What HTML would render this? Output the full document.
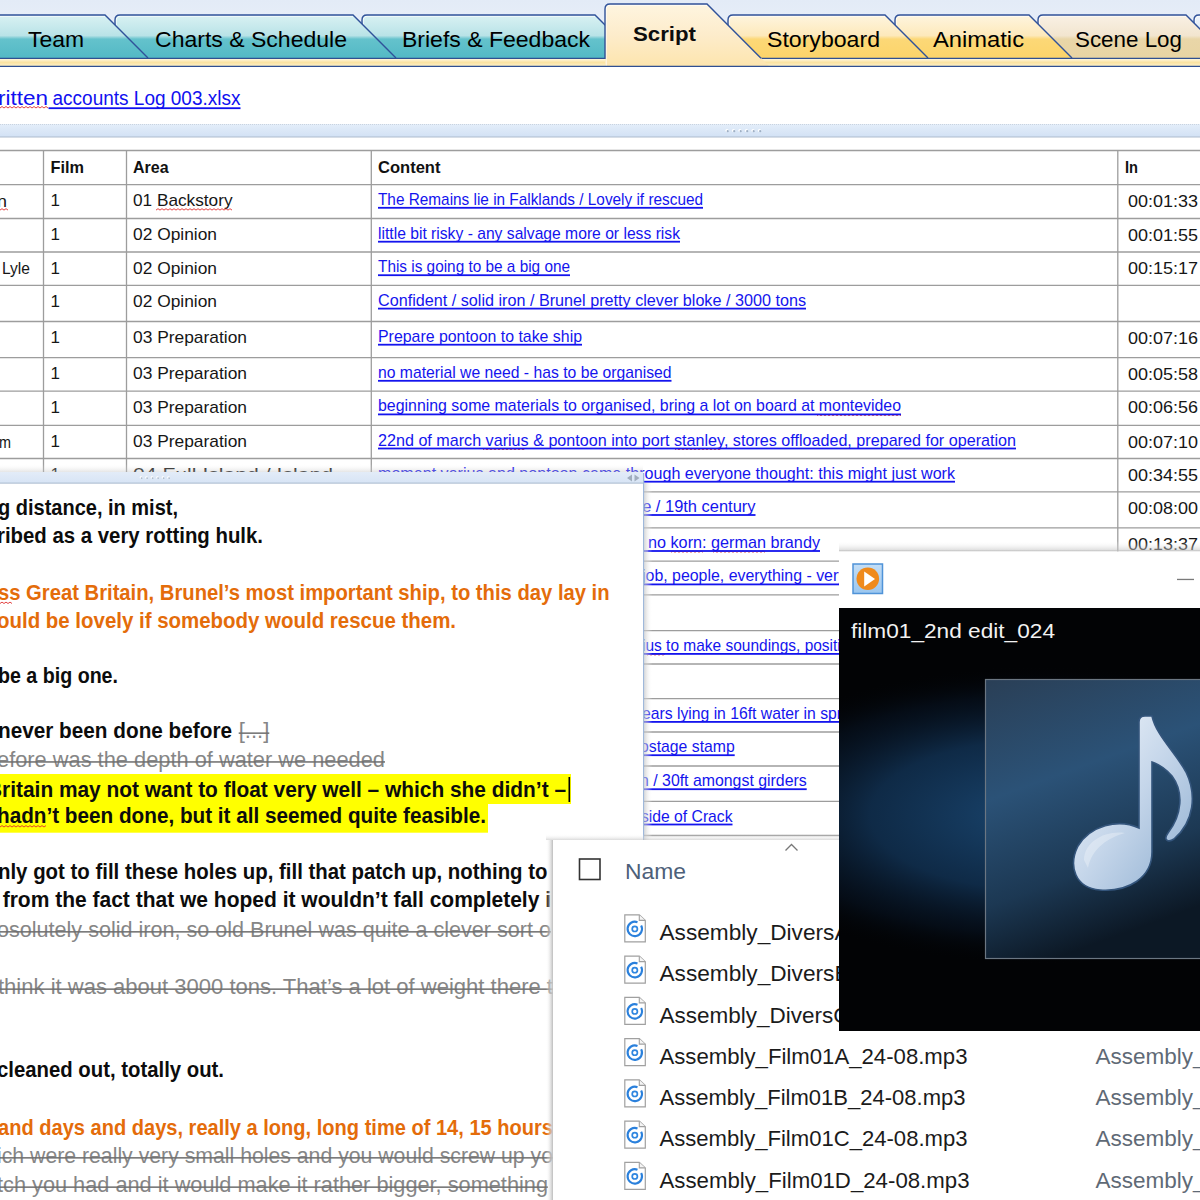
<!DOCTYPE html>
<html><head><meta charset="utf-8"><title>Script</title>
<style>html,body{margin:0;padding:0;width:1200px;height:1200px;overflow:hidden;background:#fff;font-family:"Liberation Sans",sans-serif}svg{display:block}</style>
</head><body>
<svg width="1200" height="1200" viewBox="0 0 1200 1200" font-family="Liberation Sans"><defs>
<linearGradient id="bgTop" x1="0" y1="0" x2="0" y2="1"><stop offset="0" stop-color="#e3ebf7"/><stop offset="1" stop-color="#eef3fa"/></linearGradient>
<linearGradient id="gTeal" x1="0" y1="0" x2="0" y2="1"><stop offset="0" stop-color="#d9f1f3"/><stop offset="0.48" stop-color="#b9e3e7"/><stop offset="0.56" stop-color="#64c2cc"/><stop offset="1" stop-color="#53b9c5"/></linearGradient>
<linearGradient id="gYel" x1="0" y1="0" x2="0" y2="1"><stop offset="0" stop-color="#fef5df"/><stop offset="0.48" stop-color="#fde9bb"/><stop offset="0.56" stop-color="#fcd877"/><stop offset="1" stop-color="#fcd46a"/></linearGradient>
<linearGradient id="gTan" x1="0" y1="0" x2="0" y2="1"><stop offset="0" stop-color="#f9f1e5"/><stop offset="0.48" stop-color="#f2e5cf"/><stop offset="0.56" stop-color="#e9d6a8"/><stop offset="1" stop-color="#e8d4a3"/></linearGradient>
<linearGradient id="gScript" x1="0" y1="0" x2="0" y2="1"><stop offset="0" stop-color="#fef5e0"/><stop offset="0.5" stop-color="#fdeccb"/><stop offset="1" stop-color="#fde5ae"/></linearGradient>
<linearGradient id="gBlueTab" x1="0" y1="0" x2="0" y2="1"><stop offset="0" stop-color="#eef4fb"/><stop offset="1" stop-color="#c7daf0"/></linearGradient>
<linearGradient id="gBand" x1="0" y1="0" x2="0" y2="1"><stop offset="0" stop-color="#fff9e6"/><stop offset="0.2" stop-color="#fef3d2"/><stop offset="0.55" stop-color="#fbe3a2"/><stop offset="1" stop-color="#fdf0c6"/></linearGradient>
<linearGradient id="gSplit" x1="0" y1="0" x2="0" y2="1"><stop offset="0" stop-color="#e4eefa"/><stop offset="1" stop-color="#d2e1f4"/></linearGradient>
<linearGradient id="shTop" x1="0" y1="0" x2="0" y2="1"><stop offset="0" stop-color="#fff" stop-opacity="0"/><stop offset="1" stop-color="#bdbdbd" stop-opacity="1"/></linearGradient>
<linearGradient id="shLeft" x1="0" y1="0" x2="1" y2="0"><stop offset="0" stop-color="#fff" stop-opacity="0"/><stop offset="1" stop-color="#bdbdbd" stop-opacity="1"/></linearGradient>
<linearGradient id="shRight" x1="0" y1="0" x2="1" y2="0"><stop offset="0" stop-color="#c8c8c8" stop-opacity="1"/><stop offset="1" stop-color="#fff" stop-opacity="0"/></linearGradient>
<linearGradient id="gDocBar" x1="0" y1="0" x2="0" y2="1"><stop offset="0" stop-color="#e3ecf8"/><stop offset="1" stop-color="#d7e4f5"/></linearGradient>
<radialGradient id="gGlow" gradientUnits="userSpaceOnUse" cx="1040" cy="815" r="340" gradientTransform="translate(1040 815) scale(1 0.44) translate(-1040 -815)"><stop offset="0" stop-color="#1a4670"/><stop offset="0.5" stop-color="#113152" stop-opacity="0.85"/><stop offset="0.8" stop-color="#081628" stop-opacity="0.5"/><stop offset="1" stop-color="#020305" stop-opacity="0"/></radialGradient>
<linearGradient id="gAlbum" x1="0" y1="0" x2="0.3" y2="1"><stop offset="0" stop-color="#2a3f56"/><stop offset="0.4" stop-color="#2b5277"/><stop offset="0.75" stop-color="#1c3853"/><stop offset="1" stop-color="#0c1825"/></linearGradient>
<linearGradient id="gNote" x1="0" y1="0" x2="1" y2="1"><stop offset="0" stop-color="#f4f8fc"/><stop offset="0.5" stop-color="#c5d6ea"/><stop offset="1" stop-color="#8eaed0"/></linearGradient>
<linearGradient id="gIcon" x1="0" y1="0" x2="0" y2="1"><stop offset="0" stop-color="#c4def6"/><stop offset="1" stop-color="#9ac6ef"/></linearGradient>
</defs>
<rect x="0" y="0" width="1200" height="1200" fill="#fff"/>
<rect x="0" y="0" width="1200" height="66" fill="url(#bgTop)"/>
<path d="M1194,58 L1194,20 Q1194,15 1199,15 L1400,15 L1443,58 Z" fill="url(#gBlueTab)"/>
<path d="M1195.2,58 L1195.2,20 Q1195.2,16.2 1199,16.2 L1400,16.2" fill="none" stroke="#ffffff" stroke-width="1" opacity="0.8"/>
<path d="M1194,58 L1194,20 Q1194,15 1199,15 L1400,15 L1443,58" fill="none" stroke="#30529a" stroke-width="1.4"/>
<path d="M1038,58 L1038,20 Q1038,15 1043,15 L1186,15 L1229,58 Z" fill="url(#gTan)"/>
<path d="M1039.2,58 L1039.2,20 Q1039.2,16.2 1043,16.2 L1186,16.2" fill="none" stroke="#ffffff" stroke-width="1" opacity="0.8"/>
<path d="M1038,58 L1038,20 Q1038,15 1043,15 L1186,15 L1229,58" fill="none" stroke="#30529a" stroke-width="1.4"/>
<path d="M895,58 L895,20 Q895,15 900,15 L1029,15 L1072,58 Z" fill="url(#gYel)"/>
<path d="M896.2,58 L896.2,20 Q896.2,16.2 900,16.2 L1029,16.2" fill="none" stroke="#ffffff" stroke-width="1" opacity="0.8"/>
<path d="M895,58 L895,20 Q895,15 900,15 L1029,15 L1072,58" fill="none" stroke="#30529a" stroke-width="1.4"/>
<path d="M728,58 L728,20 Q728,15 733,15 L885,15 L928,58 Z" fill="url(#gYel)"/>
<path d="M729.2,58 L729.2,20 Q729.2,16.2 733,16.2 L885,16.2" fill="none" stroke="#ffffff" stroke-width="1" opacity="0.8"/>
<path d="M728,58 L728,20 Q728,15 733,15 L885,15 L928,58" fill="none" stroke="#30529a" stroke-width="1.4"/>
<path d="M362,58 L362,20 Q362,15 367,15 L595,15 L638,58 Z" fill="url(#gTeal)"/>
<path d="M363.2,58 L363.2,20 Q363.2,16.2 367,16.2 L595,16.2" fill="none" stroke="#ffffff" stroke-width="1" opacity="0.8"/>
<path d="M362,58 L362,20 Q362,15 367,15 L595,15 L638,58" fill="none" stroke="#30529a" stroke-width="1.4"/>
<path d="M115,58 L115,20 Q115,15 120,15 L353,15 L396,58 Z" fill="url(#gTeal)"/>
<path d="M116.2,58 L116.2,20 Q116.2,16.2 120,16.2 L353,16.2" fill="none" stroke="#ffffff" stroke-width="1" opacity="0.8"/>
<path d="M115,58 L115,20 Q115,15 120,15 L353,15 L396,58" fill="none" stroke="#30529a" stroke-width="1.4"/>
<path d="M-30,58 L-30,20 Q-30,15 -25,15 L105,15 L148,58 Z" fill="url(#gTeal)"/>
<path d="M-28.8,58 L-28.8,20 Q-28.8,16.2 -25,16.2 L105,16.2" fill="none" stroke="#ffffff" stroke-width="1" opacity="0.8"/>
<path d="M-30,58 L-30,20 Q-30,15 -25,15 L105,15 L148,58" fill="none" stroke="#30529a" stroke-width="1.4"/>
<rect x="0" y="58" width="1200" height="8" fill="url(#gBand)"/>
<line x1="0" y1="58.3" x2="1200" y2="58.3" stroke="#2f4f92" stroke-width="1.3"/>
<path d="M605,66 L605,9 Q605,4 610,4 L707,4 L769,66 Z" fill="url(#gScript)"/>
<path d="M606.2,66 L606.2,9 Q606.2,5.2 610,5.2 L707,5.2" fill="none" stroke="#fff" stroke-width="1" opacity="0.8"/>
<path d="M605,59 L605,9 Q605,4 610,4 L707,4 L761,58.3" fill="none" stroke="#30529a" stroke-width="1.4"/>
<line x1="0" y1="66.4" x2="1200" y2="66.4" stroke="#2f4f92" stroke-width="1.4"/>
<g font-family="Liberation Sans" fill="#1a1a1a">
<text x="28" y="47" font-size="22" fill="#000" textLength="56.0" lengthAdjust="spacingAndGlyphs">Team</text>
<text x="155" y="47" font-size="22" fill="#000" textLength="192.0" lengthAdjust="spacingAndGlyphs">Charts &amp; Schedule</text>
<text x="402" y="47" font-size="22" fill="#000" textLength="188.0" lengthAdjust="spacingAndGlyphs">Briefs &amp; Feedback</text>
<text x="633" y="41" font-size="21" font-weight="bold" fill="#0d0d0d" textLength="63.0" lengthAdjust="spacingAndGlyphs">Script</text>
<text x="767" y="47" font-size="22" fill="#000" textLength="113.0" lengthAdjust="spacingAndGlyphs">Storyboard</text>
<text x="933" y="47" font-size="22" fill="#000" textLength="91.0" lengthAdjust="spacingAndGlyphs">Animatic</text>
<text x="1075" y="47" font-size="22" fill="#000" textLength="107.0" lengthAdjust="spacingAndGlyphs">Scene Log</text>
</g>
<g font-family="Liberation Sans">
<text x="-2" y="104.7" font-size="19.5" fill="#1010f0" textLength="50.0" lengthAdjust="spacingAndGlyphs">ritten</text>
<text x="52.5" y="104.7" font-size="19.5" fill="#1010f0" textLength="188.0" lengthAdjust="spacingAndGlyphs">accounts Log 003.xlsx</text>
<rect x="48.5" y="107.3" width="192" height="1.8" fill="#1010f0"/>
<path d="M0,108 l2,-1.5 l2,1.5 l2,-1.5 l2,1.5 l2,-1.5 l2,1.5 l2,-1.5 l2,1.5 l2,-1.5 l2,1.5 l2,-1.5 l2,1.5 l2,-1.5 l2,1.5 l2,-1.5 l2,1.5 l2,-1.5 l2,1.5 l2,-1.5 l2,1.5 l2,-1.5 l2,1.5 l2,-1.5 l2,1.5" fill="none" stroke="#e03030" stroke-width="0.9"/>
</g>
<rect x="0" y="124" width="1200" height="13" fill="url(#gSplit)"/>
<line x1="0" y1="124.5" x2="1200" y2="124.5" stroke="#c9d3df" stroke-width="1" stroke-dasharray="1,1"/>
<line x1="0" y1="137" x2="1200" y2="137" stroke="#aebccd" stroke-width="1.2"/>
<circle cx="727.0" cy="130.5" r="1.6" fill="#fff"/><circle cx="727.7" cy="131.2" r="1.1" fill="#9fb0c5"/>
<circle cx="733.5" cy="130.5" r="1.6" fill="#fff"/><circle cx="734.2" cy="131.2" r="1.1" fill="#9fb0c5"/>
<circle cx="740.0" cy="130.5" r="1.6" fill="#fff"/><circle cx="740.7" cy="131.2" r="1.1" fill="#9fb0c5"/>
<circle cx="746.5" cy="130.5" r="1.6" fill="#fff"/><circle cx="747.2" cy="131.2" r="1.1" fill="#9fb0c5"/>
<circle cx="753.0" cy="130.5" r="1.6" fill="#fff"/><circle cx="753.7" cy="131.2" r="1.1" fill="#9fb0c5"/>
<circle cx="759.5" cy="130.5" r="1.6" fill="#fff"/><circle cx="760.2" cy="131.2" r="1.1" fill="#9fb0c5"/>
<g stroke="#9d9d9d" stroke-width="1.3">
<line x1="0" y1="150.5" x2="1200" y2="150.5"/>
<line x1="0" y1="184.6" x2="1200" y2="184.6"/>
<line x1="0" y1="218.5" x2="1200" y2="218.5"/>
<line x1="0" y1="252" x2="1200" y2="252"/>
<line x1="0" y1="285.4" x2="1200" y2="285.4"/>
<line x1="0" y1="321.5" x2="1200" y2="321.5"/>
<line x1="0" y1="357.6" x2="1200" y2="357.6"/>
<line x1="0" y1="391.2" x2="1200" y2="391.2"/>
<line x1="0" y1="425.3" x2="1200" y2="425.3"/>
<line x1="0" y1="458.5" x2="1200" y2="458.5"/>
<line x1="0" y1="491.8" x2="1200" y2="491.8"/>
<line x1="0" y1="527.8" x2="1200" y2="527.8"/>
<line x1="0" y1="561.2" x2="1200" y2="561.2"/>
<line x1="0" y1="594.8" x2="1200" y2="594.8"/>
<line x1="0" y1="630.7" x2="1200" y2="630.7"/>
<line x1="0" y1="664" x2="1200" y2="664"/>
<line x1="0" y1="698.7" x2="1200" y2="698.7"/>
<line x1="0" y1="732" x2="1200" y2="732"/>
<line x1="0" y1="766" x2="1200" y2="766"/>
<line x1="0" y1="801.3" x2="1200" y2="801.3"/>
<line x1="0" y1="835.5" x2="1200" y2="835.5"/>
<line x1="0" y1="870" x2="1200" y2="870"/>
<line x1="43.5" y1="150" x2="43.5" y2="1200"/>
<line x1="126.5" y1="150" x2="126.5" y2="1200"/>
<line x1="371.3" y1="150" x2="371.3" y2="1200"/>
<line x1="1117.8" y1="150" x2="1117.8" y2="1200"/>
</g>
<g font-family="Liberation Sans">
<text x="50.5" y="173.2" font-size="17" font-weight="bold" fill="#111" textLength="33.5" lengthAdjust="spacingAndGlyphs">Film</text>
<text x="133" y="173.2" font-size="17" font-weight="bold" fill="#111" textLength="35.6" lengthAdjust="spacingAndGlyphs">Area</text>
<text x="378" y="173.2" font-size="17" font-weight="bold" fill="#111" textLength="62.5" lengthAdjust="spacingAndGlyphs">Content</text>
<text x="1125" y="173.2" font-size="17" font-weight="bold" fill="#111" textLength="13.0" lengthAdjust="spacingAndGlyphs">In</text>
<text x="50.5" y="206.2" font-size="17" fill="#161616">1</text>
<text x="133" y="206.2" font-size="17" fill="#161616" textLength="99.5" lengthAdjust="spacingAndGlyphs">01 Backstory</text>
<text x="50.5" y="240.1" font-size="17" fill="#161616">1</text>
<text x="133" y="240.1" font-size="17" fill="#161616" textLength="84.0" lengthAdjust="spacingAndGlyphs">02 Opinion</text>
<text x="50.5" y="273.6" font-size="17" fill="#161616">1</text>
<text x="133" y="273.6" font-size="17" fill="#161616" textLength="84.0" lengthAdjust="spacingAndGlyphs">02 Opinion</text>
<text x="50.5" y="307.0" font-size="17" fill="#161616">1</text>
<text x="133" y="307.0" font-size="17" fill="#161616" textLength="84.0" lengthAdjust="spacingAndGlyphs">02 Opinion</text>
<text x="50.5" y="343.1" font-size="17" fill="#161616">1</text>
<text x="133" y="343.1" font-size="17" fill="#161616" textLength="114.0" lengthAdjust="spacingAndGlyphs">03 Preparation</text>
<text x="50.5" y="379.20000000000005" font-size="17" fill="#161616">1</text>
<text x="133" y="379.20000000000005" font-size="17" fill="#161616" textLength="114.0" lengthAdjust="spacingAndGlyphs">03 Preparation</text>
<text x="50.5" y="412.8" font-size="17" fill="#161616">1</text>
<text x="133" y="412.8" font-size="17" fill="#161616" textLength="114.0" lengthAdjust="spacingAndGlyphs">03 Preparation</text>
<text x="50.5" y="446.90000000000003" font-size="17" fill="#161616">1</text>
<text x="133" y="446.90000000000003" font-size="17" fill="#161616" textLength="114.0" lengthAdjust="spacingAndGlyphs">03 Preparation</text>
<text x="50.5" y="480.1" font-size="17" fill="#161616">1</text>
<text x="133" y="480.1" font-size="17" fill="#161616" textLength="200.0" lengthAdjust="spacingAndGlyphs">04 Full Island / Island</text>
<text x="-3" y="206.79999999999998" font-size="17" fill="#161616" textLength="10.0" lengthAdjust="spacingAndGlyphs">n</text>
<text x="2" y="274.2" font-size="17" fill="#161616" textLength="28.0" lengthAdjust="spacingAndGlyphs">Lyle</text>
<text x="-1" y="447.5" font-size="17" fill="#161616" textLength="12.0" lengthAdjust="spacingAndGlyphs">m</text>
<path d="M156,210.1 l2,-1.4 l2,1.4 l2,-1.4 l2,1.4 l2,-1.4 l2,1.4 l2,-1.4 l2,1.4 l2,-1.4 l2,1.4 l2,-1.4 l2,1.4 l2,-1.4 l2,1.4 l2,-1.4 l2,1.4 l2,-1.4 l2,1.4 l2,-1.4 l2,1.4 l2,-1.4 l2,1.4 l2,-1.4 l2,1.4 l2,-1.4 l2,1.4 l2,-1.4 l2,1.4 l2,-1.4 l2,1.4 l2,-1.4 l2,1.4 l2,-1.4 l2,1.4 l2,-1.4 l2,1.4 l2,-1.4 l2,1.4" fill="none" stroke="#e03030" stroke-width="0.9"/>
<path d="M817,415.7 l2,-1.4 l2,1.4 l2,-1.4 l2,1.4 l2,-1.4 l2,1.4 l2,-1.4 l2,1.4 l2,-1.4 l2,1.4 l2,-1.4 l2,1.4 l2,-1.4 l2,1.4 l2,-1.4 l2,1.4 l2,-1.4 l2,1.4 l2,-1.4 l2,1.4 l2,-1.4 l2,1.4 l2,-1.4 l2,1.4 l2,-1.4 l2,1.4 l2,-1.4 l2,1.4 l2,-1.4 l2,1.4 l2,-1.4 l2,1.4 l2,-1.4 l2,1.4 l2,-1.4 l2,1.4 l2,-1.4 l2,1.4 l2,-1.4 l2,1.4 l2,-1.4 l2,1.4" fill="none" stroke="#e03030" stroke-width="0.9"/>
<path d="M483,449.8 l2,-1.4 l2,1.4 l2,-1.4 l2,1.4 l2,-1.4 l2,1.4 l2,-1.4 l2,1.4 l2,-1.4 l2,1.4 l2,-1.4 l2,1.4 l2,-1.4 l2,1.4 l2,-1.4 l2,1.4 l2,-1.4 l2,1.4 l2,-1.4 l2,1.4 l2,-1.4" fill="none" stroke="#e03030" stroke-width="0.9"/>
<path d="M675,449.8 l2,-1.4 l2,1.4 l2,-1.4 l2,1.4 l2,-1.4 l2,1.4 l2,-1.4 l2,1.4 l2,-1.4 l2,1.4 l2,-1.4 l2,1.4 l2,-1.4 l2,1.4 l2,-1.4 l2,1.4 l2,-1.4 l2,1.4 l2,-1.4 l2,1.4 l2,-1.4 l2,1.4 l2,-1.4" fill="none" stroke="#e03030" stroke-width="0.9"/>
<path d="M671,552.3 l2,-1.4 l2,1.4 l2,-1.4 l2,1.4 l2,-1.4 l2,1.4 l2,-1.4 l2,1.4 l2,-1.4 l2,1.4 l2,-1.4 l2,1.4 l2,-1.4 l2,1.4 l2,-1.4 l2,1.4" fill="none" stroke="#e03030" stroke-width="0.9"/>
<path d="M713,552.3 l2,-1.4 l2,1.4 l2,-1.4 l2,1.4 l2,-1.4 l2,1.4 l2,-1.4 l2,1.4 l2,-1.4 l2,1.4 l2,-1.4 l2,1.4 l2,-1.4 l2,1.4 l2,-1.4 l2,1.4 l2,-1.4 l2,1.4 l2,-1.4 l2,1.4 l2,-1.4 l2,1.4 l2,-1.4 l2,1.4 l2,-1.4 l2,1.4" fill="none" stroke="#e03030" stroke-width="0.9"/>
<rect x="640" y="550.1999999999999" width="10" height="1.6" fill="#1414ee"/>
<path d="M647,655.2 l2,-1.4 l2,1.4 l2,-1.4 l2,1.4 l2,-1.4 l2,1.4 l2,-1.4 l2,1.4 l2,-1.4" fill="none" stroke="#e03030" stroke-width="0.9"/>
<path d="M0,210.1 l2,-1.4 l2,1.4 l2,-1.4 l2,1.4" fill="none" stroke="#e03030" stroke-width="0.9"/>
<text x="378" y="204.79999999999998" font-size="17" fill="#1414ee" textLength="325.0" lengthAdjust="spacingAndGlyphs">The Remains lie in Falklands / Lovely if rescued</text>
<rect x="378" y="206.9" width="325" height="1.8" fill="#1414ee"/>
<text x="378" y="238.7" font-size="17" fill="#1414ee" textLength="302.0" lengthAdjust="spacingAndGlyphs">little bit risky - any salvage more or less risk</text>
<rect x="378" y="240.8" width="302" height="1.8" fill="#1414ee"/>
<text x="378" y="272.2" font-size="17" fill="#1414ee" textLength="192.0" lengthAdjust="spacingAndGlyphs">This is going to be a big one</text>
<rect x="378" y="274.3" width="192" height="1.8" fill="#1414ee"/>
<text x="378" y="305.59999999999997" font-size="17" fill="#1414ee" textLength="428.0" lengthAdjust="spacingAndGlyphs">Confident / solid iron / Brunel pretty clever bloke / 3000 tons</text>
<rect x="378" y="307.7" width="428" height="1.8" fill="#1414ee"/>
<text x="378" y="341.7" font-size="17" fill="#1414ee" textLength="204.0" lengthAdjust="spacingAndGlyphs">Prepare pontoon to take ship</text>
<rect x="378" y="343.8" width="204" height="1.8" fill="#1414ee"/>
<text x="378" y="377.8" font-size="17" fill="#1414ee" textLength="293.5" lengthAdjust="spacingAndGlyphs">no material we need - has to be organised</text>
<rect x="378" y="379.90000000000003" width="293.5" height="1.8" fill="#1414ee"/>
<text x="378" y="411.4" font-size="17" fill="#1414ee" textLength="523.0" lengthAdjust="spacingAndGlyphs">beginning some materials to organised, bring a lot on board at montevideo</text>
<rect x="378" y="413.5" width="523" height="1.8" fill="#1414ee"/>
<text x="378" y="445.5" font-size="17" fill="#1414ee" textLength="638.0" lengthAdjust="spacingAndGlyphs">22nd of march varius &amp; pontoon into port stanley, stores offloaded, prepared for operation</text>
<rect x="378" y="447.6" width="638" height="1.8" fill="#1414ee"/>
<text x="378" y="478.7" font-size="17" fill="#1414ee" textLength="577.0" lengthAdjust="spacingAndGlyphs">moment varius and pontoon came through everyone thought: this might just work</text>
<rect x="378" y="480.8" width="577" height="1.8" fill="#1414ee"/>
<text x="633" y="512.0" font-size="17" fill="#1414ee" textLength="122.5" lengthAdjust="spacingAndGlyphs">ne / 19th century</text>
<rect x="633" y="514.1" width="122.5" height="1.8" fill="#1414ee"/>
<text x="648" y="548.0" font-size="17" fill="#1414ee" textLength="172.0" lengthAdjust="spacingAndGlyphs">no korn: german brandy</text>
<rect x="648" y="550.0999999999999" width="172" height="1.8" fill="#1414ee"/>
<text x="642" y="581.4000000000001" font-size="17" fill="#1414ee" textLength="244.0" lengthAdjust="spacingAndGlyphs">job, people, everything - very good</text>
<rect x="642" y="583.5" width="244" height="1.8" fill="#1414ee"/>
<text x="642" y="650.9000000000001" font-size="17" fill="#1414ee" textLength="216.0" lengthAdjust="spacingAndGlyphs">ius to make soundings, position</text>
<rect x="642" y="653.0" width="216" height="1.8" fill="#1414ee"/>
<text x="642" y="718.9000000000001" font-size="17" fill="#1414ee" textLength="221.0" lengthAdjust="spacingAndGlyphs">ears lying in 16ft water in spring</text>
<rect x="642" y="721.0" width="221" height="1.8" fill="#1414ee"/>
<text x="640" y="752.2" font-size="17" fill="#1414ee" textLength="94.7" lengthAdjust="spacingAndGlyphs">ostage stamp</text>
<rect x="640" y="754.3" width="94.70000000000005" height="1.8" fill="#1414ee"/>
<text x="640" y="786.2" font-size="17" fill="#1414ee" textLength="166.7" lengthAdjust="spacingAndGlyphs">n / 30ft amongst girders</text>
<rect x="640" y="788.3" width="166.70000000000005" height="1.8" fill="#1414ee"/>
<text x="641" y="821.5" font-size="17" fill="#1414ee" textLength="91.5" lengthAdjust="spacingAndGlyphs">side of Crack</text>
<rect x="641" y="823.5999999999999" width="91.5" height="1.8" fill="#1414ee"/>
<text x="1128" y="206.79999999999998" font-size="17" fill="#161616" textLength="70.0" lengthAdjust="spacingAndGlyphs">00:01:33</text>
<text x="1128" y="240.7" font-size="17" fill="#161616" textLength="70.0" lengthAdjust="spacingAndGlyphs">00:01:55</text>
<text x="1128" y="274.2" font-size="17" fill="#161616" textLength="70.0" lengthAdjust="spacingAndGlyphs">00:15:17</text>
<text x="1128" y="343.7" font-size="17" fill="#161616" textLength="70.0" lengthAdjust="spacingAndGlyphs">00:07:16</text>
<text x="1128" y="379.8" font-size="17" fill="#161616" textLength="70.0" lengthAdjust="spacingAndGlyphs">00:05:58</text>
<text x="1128" y="413.4" font-size="17" fill="#161616" textLength="70.0" lengthAdjust="spacingAndGlyphs">00:06:56</text>
<text x="1128" y="447.5" font-size="17" fill="#161616" textLength="70.0" lengthAdjust="spacingAndGlyphs">00:07:10</text>
<text x="1128" y="480.7" font-size="17" fill="#161616" textLength="70.0" lengthAdjust="spacingAndGlyphs">00:34:55</text>
<text x="1128" y="514.0" font-size="17" fill="#161616" textLength="70.0" lengthAdjust="spacingAndGlyphs">00:08:00</text>
<text x="1128" y="550.0" font-size="17" fill="#161616" textLength="70.0" lengthAdjust="spacingAndGlyphs">00:13:37</text>
</g>
<rect x="0" y="464" width="643" height="8" fill="url(#shTop)" opacity="0.4"/>
<rect x="0" y="472" width="643" height="728" fill="#fff"/>
<rect x="0" y="472" width="643" height="11" fill="url(#gDocBar)"/>
<line x1="0" y1="483.2" x2="643" y2="483.2" stroke="#b4c3d6" stroke-width="1.2"/>
<rect x="643" y="473" width="1.3" height="727" fill="#9fb8da"/>
<rect x="644.3" y="483" width="8" height="717" fill="url(#shRight)" opacity="0.7"/>
<circle cx="141.0" cy="477.5" r="1.3" fill="#fff"/><circle cx="141.6" cy="478.1" r="0.9" fill="#a9b7c8"/>
<circle cx="146.5" cy="477.5" r="1.3" fill="#fff"/><circle cx="147.1" cy="478.1" r="0.9" fill="#a9b7c8"/>
<circle cx="152.0" cy="477.5" r="1.3" fill="#fff"/><circle cx="152.6" cy="478.1" r="0.9" fill="#a9b7c8"/>
<circle cx="157.5" cy="477.5" r="1.3" fill="#fff"/><circle cx="158.1" cy="478.1" r="0.9" fill="#a9b7c8"/>
<circle cx="163.0" cy="477.5" r="1.3" fill="#fff"/><circle cx="163.6" cy="478.1" r="0.9" fill="#a9b7c8"/>
<circle cx="168.5" cy="477.5" r="1.3" fill="#fff"/><circle cx="169.1" cy="478.1" r="0.9" fill="#a9b7c8"/>
<path d="M632,474.5 l-5,3.5 l5,3.5 z M634.5,474.5 l5,3.5 l-5,3.5 z" fill="#a0adbd"/>
<rect x="0" y="774" width="571" height="30" fill="#ffff00"/>
<rect x="0" y="803" width="488" height="29.7" fill="#ffff00"/>
<g font-family="Liberation Sans">
<text x="-2" y="514.7" font-size="22" font-weight="bold" fill="#0c0c0c" textLength="180.0" lengthAdjust="spacingAndGlyphs">g distance, in mist,</text>
<text x="-3" y="542.7" font-size="22" font-weight="bold" fill="#0c0c0c" textLength="266.0" lengthAdjust="spacingAndGlyphs">ribed as a very rotting hulk.</text>
<text x="-2" y="600" font-size="22" font-weight="bold" fill="#e46c0a" textLength="611.6" lengthAdjust="spacingAndGlyphs">ss Great Britain, Brunel’s most important ship, to this day lay in</text>
<text x="-3" y="628" font-size="22" font-weight="bold" fill="#e46c0a" textLength="459.0" lengthAdjust="spacingAndGlyphs">ould be lovely if somebody would rescue them.</text>
<text x="-2" y="682.7" font-size="22" font-weight="bold" fill="#0c0c0c" textLength="120.0" lengthAdjust="spacingAndGlyphs">be a big one.</text>
<text x="-2" y="738" font-size="22" font-weight="bold" fill="#0c0c0c" textLength="234.0" lengthAdjust="spacingAndGlyphs">never been done before</text>
<text x="-3" y="823.3" font-size="22" font-weight="bold" fill="#0c0c0c" textLength="489.0" lengthAdjust="spacingAndGlyphs">hadn’t been done, but it all seemed quite feasible.</text>
<text x="-2" y="878.5" font-size="22" font-weight="bold" fill="#0c0c0c" textLength="549.5" lengthAdjust="spacingAndGlyphs">nly got to fill these holes up, fill that patch up, nothing to</text>
<text x="2.7" y="907.3" font-size="22" font-weight="bold" fill="#0c0c0c" textLength="548.3" lengthAdjust="spacingAndGlyphs">from the fact that we hoped it wouldn’t fall completely i</text>
<text x="-3" y="1077.3" font-size="22" font-weight="bold" fill="#0c0c0c" textLength="227.0" lengthAdjust="spacingAndGlyphs">cleaned out, totally out.</text>
<text x="-2" y="1134.7" font-size="22" font-weight="bold" fill="#e46c0a" textLength="555.0" lengthAdjust="spacingAndGlyphs">and days and days, really a long, long time of 14, 15 hours</text>
<text x="-13" y="796.7" font-size="22" font-weight="bold" fill="#0c0c0c" textLength="579.0" lengthAdjust="spacingAndGlyphs">Britain may not want to float very well – which she didn’t –</text>
<rect x="568.5" y="777" width="1.6" height="25" fill="#000"/>
<text x="238.7" y="738" font-size="22" fill="#868686" textLength="30.6" lengthAdjust="spacingAndGlyphs">[...]</text>
<rect x="238.7" y="732.4" width="30.600000000000023" height="1.5" fill="#6e6e6e"/>
<text x="-3" y="766.8" font-size="22" fill="#868686" textLength="388.0" lengthAdjust="spacingAndGlyphs">efore was the depth of water we needed</text>
<rect x="0" y="761.1999999999999" width="385" height="1.5" fill="#6e6e6e"/>
<text x="-3" y="936.7" font-size="22" fill="#868686" textLength="554.0" lengthAdjust="spacingAndGlyphs">osolutely solid iron, so old Brunel was quite a clever sort o</text>
<rect x="0" y="931.1" width="551" height="1.5" fill="#6e6e6e"/>
<text x="-2" y="994" font-size="22" fill="#868686" textLength="555.0" lengthAdjust="spacingAndGlyphs">think it was about 3000 tons. That’s a lot of weight there t</text>
<rect x="0" y="988.4" width="553" height="1.5" fill="#6e6e6e"/>
<text x="-3" y="1162.7" font-size="22" fill="#868686" textLength="556.0" lengthAdjust="spacingAndGlyphs">ich were really very small holes and you would screw up yo</text>
<rect x="0" y="1157.1000000000001" width="553" height="1.5" fill="#6e6e6e"/>
<text x="-3" y="1192" font-size="22" fill="#868686" textLength="551.0" lengthAdjust="spacingAndGlyphs">tch you had and it would make it rather bigger, something</text>
<rect x="0" y="1186.4" width="548" height="1.5" fill="#6e6e6e"/>
<path d="M0,603.5 l2,-1.4 l2,1.4 l2,-1.4 l2,1.4 l2,-1.4 l2,1.4" fill="none" stroke="#e03030" stroke-width="0.9"/>
<path d="M0,827 l2,-1.4 l2,1.4 l2,-1.4 l2,1.4 l2,-1.4 l2,1.4 l2,-1.4 l2,1.4 l2,-1.4 l2,1.4 l2,-1.4 l2,1.4 l2,-1.4 l2,1.4 l2,-1.4 l2,1.4 l2,-1.4 l2,1.4 l2,-1.4 l2,1.4 l2,-1.4 l2,1.4 l2,-1.4" fill="none" stroke="#e03030" stroke-width="0.9"/>
</g>
<rect x="546" y="834" width="660" height="6" fill="url(#shTop)" opacity="0.55"/>
<rect x="546" y="840" width="7" height="360" fill="url(#shLeft)"/>
<rect x="553" y="840" width="647" height="360" fill="#fff"/>
<rect x="579.5" y="859" width="20.5" height="20.5" fill="none" stroke="#333" stroke-width="1.6"/>
<path d="M785.5,850.5 L791.5,844.5 L797.5,850.5" fill="none" stroke="#777" stroke-width="1.3"/>
<g font-family="Liberation Sans">
<text x="625" y="879" font-size="22" fill="#4d6079" textLength="61.0" lengthAdjust="spacingAndGlyphs">Name</text>
<path d="M624.8,914.9000000000001 h14.5 l6,5.5 v21.5 h-20.5 z" fill="#fff" stroke="#a0a0a0" stroke-width="1.2"/>
<path d="M639.3,914.9000000000001 v5.5 h6" fill="#f4f4f4" stroke="#a0a0a0" stroke-width="1.1"/>
<path d="M641.16,925.5200000000001 A7.2,7.2 0 1 1 637.5,922.2200000000001" fill="none" stroke="#2a80dc" stroke-width="2.1"/>
<circle cx="634.8" cy="928.9000000000001" r="2.6" fill="none" stroke="#2f86e0" stroke-width="1.7"/>
<text x="659.5" y="940.0" font-size="22" fill="#1b1b1b" textLength="190.0" lengthAdjust="spacingAndGlyphs">Assembly_DiversA</text>
<path d="M624.8,956.1500000000001 h14.5 l6,5.5 v21.5 h-20.5 z" fill="#fff" stroke="#a0a0a0" stroke-width="1.2"/>
<path d="M639.3,956.1500000000001 v5.5 h6" fill="#f4f4f4" stroke="#a0a0a0" stroke-width="1.1"/>
<path d="M641.16,966.7700000000001 A7.2,7.2 0 1 1 637.5,963.4700000000001" fill="none" stroke="#2a80dc" stroke-width="2.1"/>
<circle cx="634.8" cy="970.1500000000001" r="2.6" fill="none" stroke="#2f86e0" stroke-width="1.7"/>
<text x="659.5" y="981.25" font-size="22" fill="#1b1b1b" textLength="190.0" lengthAdjust="spacingAndGlyphs">Assembly_DiversB</text>
<path d="M624.8,997.4000000000001 h14.5 l6,5.5 v21.5 h-20.5 z" fill="#fff" stroke="#a0a0a0" stroke-width="1.2"/>
<path d="M639.3,997.4000000000001 v5.5 h6" fill="#f4f4f4" stroke="#a0a0a0" stroke-width="1.1"/>
<path d="M641.16,1008.0200000000001 A7.2,7.2 0 1 1 637.5,1004.7200000000001" fill="none" stroke="#2a80dc" stroke-width="2.1"/>
<circle cx="634.8" cy="1011.4000000000001" r="2.6" fill="none" stroke="#2f86e0" stroke-width="1.7"/>
<text x="659.5" y="1022.5" font-size="22" fill="#1b1b1b" textLength="190.0" lengthAdjust="spacingAndGlyphs">Assembly_DiversC</text>
<path d="M624.8,1038.65 h14.5 l6,5.5 v21.5 h-20.5 z" fill="#fff" stroke="#a0a0a0" stroke-width="1.2"/>
<path d="M639.3,1038.65 v5.5 h6" fill="#f4f4f4" stroke="#a0a0a0" stroke-width="1.1"/>
<path d="M641.16,1049.27 A7.2,7.2 0 1 1 637.5,1045.97" fill="none" stroke="#2a80dc" stroke-width="2.1"/>
<circle cx="634.8" cy="1052.65" r="2.6" fill="none" stroke="#2f86e0" stroke-width="1.7"/>
<text x="659.5" y="1063.75" font-size="22" fill="#1b1b1b" textLength="308.0" lengthAdjust="spacingAndGlyphs">Assembly_Film01A_24-08.mp3</text>
<text x="1095.5" y="1063.75" font-size="22" fill="#5f6a76" textLength="110.0" lengthAdjust="spacingAndGlyphs">Assembly_</text>
<path d="M624.8,1079.9 h14.5 l6,5.5 v21.5 h-20.5 z" fill="#fff" stroke="#a0a0a0" stroke-width="1.2"/>
<path d="M639.3,1079.9 v5.5 h6" fill="#f4f4f4" stroke="#a0a0a0" stroke-width="1.1"/>
<path d="M641.16,1090.52 A7.2,7.2 0 1 1 637.5,1087.22" fill="none" stroke="#2a80dc" stroke-width="2.1"/>
<circle cx="634.8" cy="1093.9" r="2.6" fill="none" stroke="#2f86e0" stroke-width="1.7"/>
<text x="659.5" y="1105.0" font-size="22" fill="#1b1b1b" textLength="306.0" lengthAdjust="spacingAndGlyphs">Assembly_Film01B_24-08.mp3</text>
<text x="1095.5" y="1105.0" font-size="22" fill="#5f6a76" textLength="110.0" lengthAdjust="spacingAndGlyphs">Assembly_</text>
<path d="M624.8,1121.15 h14.5 l6,5.5 v21.5 h-20.5 z" fill="#fff" stroke="#a0a0a0" stroke-width="1.2"/>
<path d="M639.3,1121.15 v5.5 h6" fill="#f4f4f4" stroke="#a0a0a0" stroke-width="1.1"/>
<path d="M641.16,1131.77 A7.2,7.2 0 1 1 637.5,1128.47" fill="none" stroke="#2a80dc" stroke-width="2.1"/>
<circle cx="634.8" cy="1135.15" r="2.6" fill="none" stroke="#2f86e0" stroke-width="1.7"/>
<text x="659.5" y="1146.25" font-size="22" fill="#1b1b1b" textLength="308.0" lengthAdjust="spacingAndGlyphs">Assembly_Film01C_24-08.mp3</text>
<text x="1095.5" y="1146.25" font-size="22" fill="#5f6a76" textLength="110.0" lengthAdjust="spacingAndGlyphs">Assembly_</text>
<path d="M624.8,1162.4 h14.5 l6,5.5 v21.5 h-20.5 z" fill="#fff" stroke="#a0a0a0" stroke-width="1.2"/>
<path d="M639.3,1162.4 v5.5 h6" fill="#f4f4f4" stroke="#a0a0a0" stroke-width="1.1"/>
<path d="M641.16,1173.02 A7.2,7.2 0 1 1 637.5,1169.72" fill="none" stroke="#2a80dc" stroke-width="2.1"/>
<circle cx="634.8" cy="1176.4" r="2.6" fill="none" stroke="#2f86e0" stroke-width="1.7"/>
<text x="659.5" y="1187.5" font-size="22" fill="#1b1b1b" textLength="310.0" lengthAdjust="spacingAndGlyphs">Assembly_Film01D_24-08.mp3</text>
<text x="1095.5" y="1187.5" font-size="22" fill="#5f6a76" textLength="110.0" lengthAdjust="spacingAndGlyphs">Assembly_</text>
</g>
<rect x="839" y="541" width="361" height="10" fill="url(#shTop)" opacity="0.6"/>
<rect x="839" y="550.5" width="361" height="1" fill="#bdbdbd"/>
<rect x="839" y="551.5" width="361" height="57" fill="#fff"/>
<rect x="853" y="564" width="29.5" height="29.5" fill="url(#gIcon)" stroke="#4f93d8" stroke-width="1.5"/>
<circle cx="867.8" cy="578.8" r="11.3" fill="#ef8a1c"/>
<path d="M864.2,571.5 L864.2,586.5 L875,579 Z" fill="#fff"/>
<rect x="1177" y="578.8" width="17" height="1.3" fill="#7a7a7a"/>
<rect x="839" y="608" width="361" height="423" fill="#020305"/>
<rect x="839" y="608" width="361" height="423" fill="url(#gGlow)"/>
<rect x="985.5" y="679.5" width="230" height="279" fill="url(#gAlbum)" stroke="#6b7682" stroke-width="1.2"/>
<path d="M1139,722 Q1139,716 1145,716 L1152,716 C1156,735 1175,752 1186,772 C1197,795 1194,822 1174,839 C1168,843 1163,840 1168,833 C1182,815 1184,792 1172,776 C1165,768 1158,764 1152,762 L1152,852 C1152,878 1128,892 1100,890 C1075,888 1068,866 1078,846 C1090,826 1118,818 1139,828 Z" fill="url(#gNote)" stroke="#34557c" stroke-width="1.6"/>
<path d="M1084,860 C1084,842 1105,830 1125,833 C1108,838 1092,848 1088,868 Z" fill="#ffffff" opacity="0.3"/>
<g font-family="Liberation Sans">
<text x="851" y="638.4" font-size="21" fill="#f2f2f2" textLength="204.0" lengthAdjust="spacingAndGlyphs">film01_2nd edit_024</text>
</g></svg>
</body></html>
